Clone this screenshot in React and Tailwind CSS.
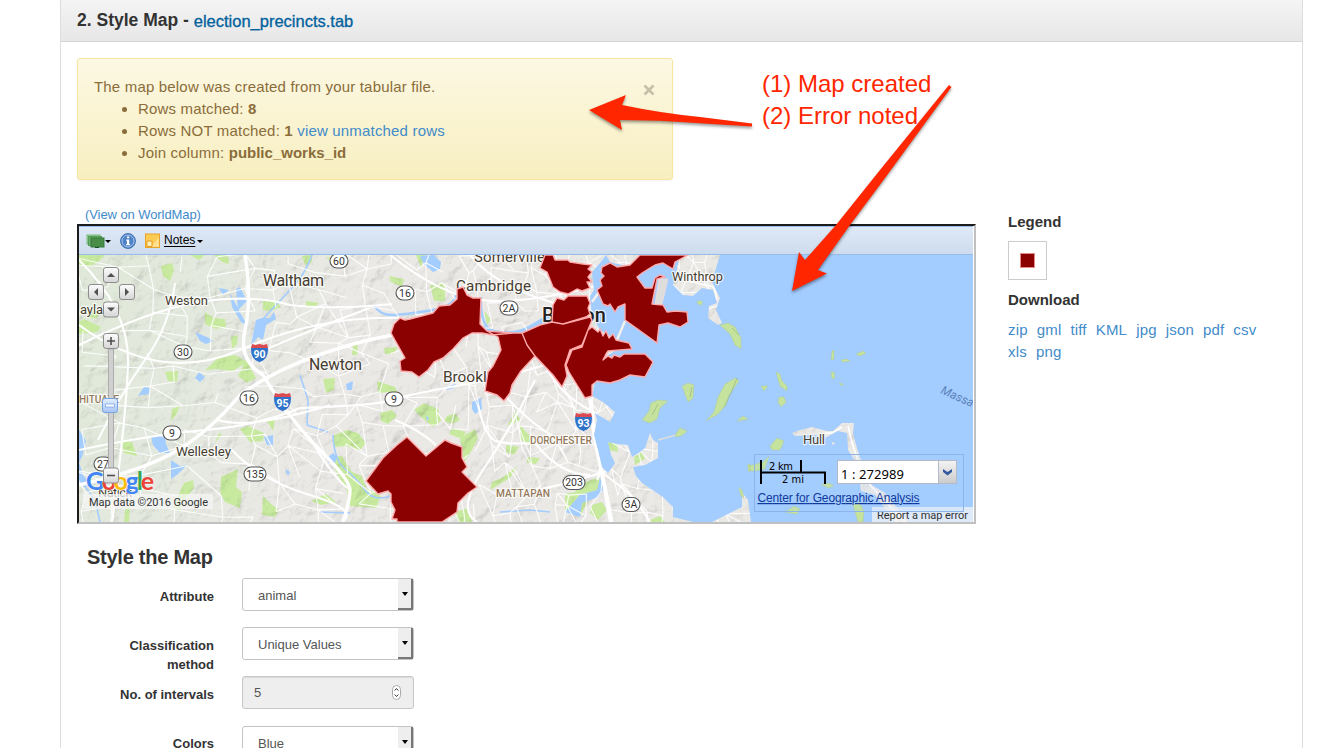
import React from "react";

const LAND =
  "M79 255H606L600 263 592 272 594 290 590 296 592 316 600 330 625 345 600 360 592 396 603 402 615 412 610 422 595 413 597 420 594 435 598 450 602 467 608 473 615 463 611 455 608 442 617 444 628 445 632 457 640 452 645 448 650 433 653 440 658 443 658 458 645 465 633 467 636 476 642 483 663 497 673 507 673 517 693 522H79Z M606 255H645L630 267 610 262Z M680 255 677 268 673 285 683 295 693 296 702 288 713 290 717 303 709 306 708 318 718 325 722 323 716 310 720 298 712 282 720 255Z M792 433 800 430 812 427 827 431 833 431 842 423 854 423 853 433 856 445 860 457 872 485 885 493 905 517 907 522H895L875 495 861 491 860 484 870 483 860 470 848 450 847 433 838 431 825 438 815 435 795 436Z M712 522 742 507 742 497 738 487 748 500 751 522Z M655 304 662 304 668 279 659 279Z M832 442 835 443 834 445 832 444Z";

const GREENS = [
  "M79 255H105L98 262 86 268 79 264Z", "M161 266 172 263 174 270 170 281 163 276Z", "M214 255 228 255 229 264 222 262Z",
  "M87 310 100 312 97 318 88 318Z", "M84 319 101 327 97 332 79 334V322Z", "M205 312 214 318 225 319 226 327 216 329 205 324Z",
  "M231 337 238 335 237 344 232 349Z", "M263 301 276 300 281 307 270 311 263 310Z", "M205 370 218 358 235 355 247 362 233 371 216 369Z",
  "M165 372 178 371 177 382 168 381Z", "M238 376 246 360 256 378 247 383Z", "M240 429 248 426 264 433 263 441 250 442Z",
  "M121 440 132 442 137 456 124 453Z", "M221 477 238 469 236 487 242 492 240 508 225 502 220 492Z", "M184 483 193 480 194 488 185 499 180 510 172 508Z",
  "M263 496 270 503 279 510 275 517 262 515Z", "M302 256 312 255 312 262 305 265Z", "M306 301 319 303 314 308 306 307Z",
  "M389 276 404 279 402 287 391 282Z", "M430 285 445 283 445 301 434 301Z", "M416 255H425L421 268Z", "M384 348 398 347 393 354 385 354Z",
  "M353 344 358 344 357 355 352 355Z", "M323 379 335 378 334 390 326 393Z", "M377 381 395 387 399 396 388 392 378 393Z",
  "M414 410 424 403 438 409 441 421 433 427 421 417Z", "M380 413 392 410 397 416 388 424 381 421Z", "M447 416 455 413 460 420 452 424 444 421Z",
  "M334 435 347 430 358 433 366 443 360 450 345 446 334 447Z", "M331 456 342 456 352 472 362 476 366 488 381 496 376 508 350 506 347 491 333 466Z",
  "M460 438 475 429 478 438 472 450 464 462Z", "M452 428 466 432 462 439 449 434Z", "M311 501 326 494 336 502 321 505Z", "M455 512 468 508 472 522H458Z",
  "M520 425 529 435 532 446 521 440Z", "M527 457 540 458 536 464 527 463Z", "M565 494 575 492 580 484 599 477 602 487 590 497 581 515 565 510Z",
  "M592 505 602 502 607 510 598 520 590 513Z", "M606 442 617 443 618 452 609 450Z", "M634 457 642 452 645 459 635 465Z",
  "M507 426 520 420 516 411Z", "M490 490 510 478 517 466 502 478 492 482Z", "M506 445 519 447 514 455 506 452Z", "M605 465 608 464 608 472Z",
  "M125 510 130 505 129 522H124Z", "M650 520 660 516 665 522H650Z", "M190 255 205 255 199 260Z",
  "M325 257 340 259 334 263Z", "M172 409 180 406 176 415 171 421Z", "M215 443 222 434 219 433Z", "M484 310 491 320 487 325Z", "M267 421 275 420 273 431Z",
];

const ISLANDS = [
  "M720 325 728 323 735 327 741 338 741 349 735 345 730 334Z", "M697 301 702 301 702 305 698 304Z",
  "M642 420 649 411 651 403 658 400 668 401 660 408 657 419 650 423Z", "M682 386 688 383 694 385 693 398 688 402Z",
  "M706 421 714 412 718 397 725 384 735 378 739 381 729 395 726 405 718 414Z", "M675 435 680 428 687 431 683 435 677 437Z",
  "M832 351 834 350 834 359 831 360Z", "M841 360 847 359 850 361 843 362Z", "M856 354 863 351 866 353 860 356Z",
  "M776 372 780 374 782 381 787 386 787 391 780 386Z", "M761 386 768 386 764 391Z", "M779 397 784 397 786 402 781 407 778 402Z",
  "M770 446 777 438 784 441 780 450 772 450Z", "M749 466 763 462 769 456 765 469 755 471 750 471Z",
  "M831 372 834 372 835 378 832 379Z", "M839 383 843 384 842 386Z", "M737 421 743 416 748 419 743 420Z",
  "M748 464 750 464 750 472 748 470Z", "M785 512 794 506 800 509 797 514Z", "M853 505 859 502 864 511 863 522H858Z", "M821 484 829 483 834 486 828 488Z", "M739 487 742 490 744 498 741 496Z",
];

const LAKES = [
  "M420 256 434 255 441 262 440 269 433 272 424 264Z", "M219 288 229 290 223 295Z", "M236 289 240 287 247 301 238 310Z", "M195 332 202 335 209 338 213 341 206 344 200 341Z",
  "M79 430 86 441 82 457 79 462Z", "M138 396 144 387 150 388 149 394 141 395Z", "M199 372 205 377 200 382 195 378Z", "M151 436 165 436 166 444 170 453 160 453 153 445Z",
  "M171 460 180 466 187 465 178 474 171 479Z", "M264 437 273 435 273 445 267 445Z", "M346 384 353 381 352 390 347 390Z", "M472 402 481 398 482 409 475 414 472 409Z",
  "M327 458 333 453 337 457 335 463 329 463Z", "M446 387 456 384 454 388 447 390Z", "M79 462 83 475 90 484 84 487 79 484Z", "M262 318 270 318 274 312 276 319 266 325 263 340 258 337 251 345 256 320Z",
  "M230 293 243 318 248 326 241 322 232 307Z", "M426 415 429 418 427 421Z", "M285 469 290 472 288 476Z", "M317 359 321 355 320 360Z",
];

const MAJOR = [
  "M79 345Q150 310 200 302T290 305Q330 310 392 304", "M79 450Q150 435 205 430T300 408Q380 405 392 400T500 378L545 365",
  "M79 325Q160 385 240 350T400 318", "M245 255Q252 300 245 330T263 375Q290 420 320 450T350 490 343 522",
  "M265 350Q310 330 370 308", "M79 485Q145 470 178 450T240 395Q280 365 350 345T485 330", "M470 255Q495 285 545 300T590 350Q590 400 597 445T610 522",
  "M598 470Q620 485 630 495T650 522", "M79 260Q130 310 128 365T112 522", "M218 420Q250 430 330 405", "M310 438Q333 478 350 490",
  "M478 405Q485 435 494 440T535 443Q560 475 590 475", "M535 380Q510 430 483 470T477 522", "M500 390Q530 425 560 440",
  "M545 365Q560 395 590 410T597 480", "M390 255Q440 295 481 300T600 285", "M175 283Q170 325 145 360T98 440",
  "M232 450Q260 480 310 495T342 522", "M535 490Q565 485 610 470", "M395 420Q420 430 436 445",
];

function streets() {
  let seed = 7;
  const rnd = () => (seed = (seed * 16807) % 2147483647) / 2147483647;
  const cols = [];
  let x = 79;
  while (x < 760) {
    const col = [];
    for (let y = 250; y < 540; y += 20) col.push([x + rnd() * 16 - 8, y + rnd() * 16 - 8]);
    cols.push(col);
    x += x < 240 ? 34 : x < 430 ? 23 : 15;
  }
  let d = "";
  cols.forEach((col, i) =>
    col.forEach((p, j) => {
      const q = cols[i + 1] && cols[i + 1][j];
      const r = col[j + 1];
      const s = cols[i + 1] && cols[i + 1][j + 1];
      if (q && rnd() < 0.68) d += `M${p}L${q}`;
      if (r && rnd() < 0.68) d += `M${p}L${r}`;
      if (s && rnd() < 0.18) d += `M${p}L${s}`;
    })
  );
  return d;
}
const STREETS = streets();

const DISTRICTS = [
  "M400 318 405 320 410 319 433 313 439 306 450 305 457 299 457 289 463 287 467 295 473 298 481 298 480 324 487 331 513 333 492 335 482 333 472 333 463 338 453 349 443 358 434 362 428 370 419 377 412 372 401 371 400 361 405 358 391 333 394 324Z",
  "M487 331 513 333 522 333 527 345 535 356 521 371 512 385 510 393 504 401 497 395 485 391 488 372 493 366 501 350 498 337Z",
  "M522 333 540 325 552 322 563 324 590 317 592 320 582 345 570 350 565 365 567 376 562 387 553 375 535 356 527 345Z",
  "M592 327 598 332 600 329 603 336 606 331 609 338 613 334 616 340 629 343 632 349 608 351 606 354 603 360 608 356 612 358 614 355 620 357 624 354 645 354 653 362 645 377 630 375 620 380 610 383 597 381 592 385 592 396 585 398 569 372 566 365 572 350 582 347 588 330Z",
  "M545 255 540 268 547 272 553 287 560 292 568 294 577 289 582 291 590 288 587 282 592 282 588 277 592 272 588 269 592 265 583 264 570 262 568 260 555 260 553 255Z",
  "M553 305 557 298 564 300 568 296 587 296 590 303 588 308 590 314 586 317 563 324 552 322Z",
  "M640 255 630 265 617 267 610 263 602 267 601 273 604 276 600 280 602 286 597 290 603 304 608 306 610 304 615 312 618 307 625 304 625 320 657 343 659 325 668 323 680 327 688 322 687 312 676 311 667 312 663 305 652 304 657 279 665 277 660 275 655 278 652 288 645 288 637 277 642 273 650 268 655 265 663 263 673 269 675 262 688 255Z",
  "M407 437 426 456 445 440 451 443 462 447 462 458 467 467 462 472 477 487 468 493 458 503 457 512 442 522H397L397 519 392 519 395 510 391 502 391 494 388 491 378 494 366 481 383 458 397 445Z",
];

const LABELS = [
  ["Waltham", 263, 286, 61, 16], ["Weston", 165, 305, 43, 13], ["ayla", 80, 314, 23, 13], ["Newton", 309, 370, 53, 15.8], ["Wellesley", 176, 456, 55, 13.4],
  ["Cambridge", 456, 291, 75, 15.2], ["Somerville", 474, 262, 71, 15], ["Winthrop", 672, 281, 51, 12.8], ["Hull", 803, 444, 22, 13],
];

const ROUTES = [["60", 339, 261], ["16", 405, 293], ["2A", 509, 308], ["30", 183, 352], ["16", 249, 398], ["9", 394, 399], ["9", 172, 433], ["27", 103, 464], ["135", 255, 474], ["203", 574, 482.5], ["3A", 631, 504.5]];
const SHIELDS = [["90", 259.5, 352], ["95", 282.5, 401], ["93", 583.5, 421]];

function PanButton({ x, y, d }) {
  return (
    <g transform={`translate(${x} ${y})`}>
      <rect x="-7.5" y="-7.5" width="15" height="15" rx="2.5" fill="url(#btn)" stroke="#8d8d8d" />
      <path d={d} fill="#505050" />
    </g>
  );
}

function MapCanvas() {
  return (
    <svg className="block h-[267px] w-[894px]" viewBox="79 255 894 267" fontFamily="Roboto, 'Liberation Sans', sans-serif">
      <defs>
        <clipPath id="land"><path d={LAND} /></clipPath>
        <linearGradient id="btn" x1="0" y1="0" x2="0" y2="1"><stop offset="0" stopColor="#fdfdfd" /><stop offset="1" stopColor="#d5d5d5" /></linearGradient>
        <linearGradient id="trig" x1="0" y1="0" x2="0" y2="1"><stop offset="0" stopColor="#f4f4f4" /><stop offset="1" stopColor="#cbcbcb" /></linearGradient>
        <linearGradient id="knob" x1="0" y1="0" x2="0" y2="1"><stop offset="0" stopColor="#e4efff" /><stop offset="1" stopColor="#a5c5f4" /></linearGradient>
        <linearGradient id="west" x1="79" x2="330" y1="300" y2="380" gradientUnits="userSpaceOnUse">
          <stop offset="0" stopColor="#e0e9d9" /><stop offset=".5" stopColor="#e4e9df" /><stop offset="1" stopColor="#ebe9e6" />
        </linearGradient>
        <filter id="relief" x="0" y="0" width="100%" height="100%">
          <feTurbulence type="fractalNoise" baseFrequency=".055" numOctaves="4" seed="12" />
          <feDiffuseLighting surfaceScale="5" diffuseConstant="1.3" lightingColor="#fff"><feDistantLight azimuth="225" elevation="52" /></feDiffuseLighting>
        </filter>
      </defs>
      <rect x="79" y="255" width="894" height="267" fill="#a3ccff" />
      <g clipPath="url(#land)">
        <rect x="79" y="255" width="894" height="267" fill="url(#west)" />
        <path d={GREENS.join("")} fill="#c8ea9f" />
        <rect x="79" y="255" width="894" height="267" filter="url(#relief)" opacity=".24" style={{ mixBlendMode: "multiply" }} />
        <path d={LAKES.join("")} fill="#a3ccff" />
        <path d="M374 305Q380 316 395 315T433 310T457 292M481 297Q480 322 490 330" fill="none" stroke="#a3ccff" strokeWidth="2.5" />
        <path d="M333 435Q334 460 345 469T365 490 390 496M262 320 290 290Q305 275 312 255M79 478 95 500 100 522M300 375 308 400 307 425 328 432M320 512 350 513M500 512 530 510 550 512" fill="none" stroke="#a3ccff" strokeWidth="1.6" />
        <path d="M483 326Q510 337 530 325L552 312 552 322 530 332Q505 338 485 332ZM565 512 580 495 597 490 600 478 605 487 598 497 582 503 580 517Z M590 340 597 350 592 365Z" fill="#a3ccff" />
        <path d={STREETS} fill="none" stroke="#fff" strokeWidth="1.1" opacity=".9" />
        <path d={MAJOR.join("")} fill="none" stroke="#fff" strokeWidth="2.1" />
        <path d="M245 255Q252 300 245 330T263 375Q290 420 320 450T350 490 343 522M79 485Q145 470 178 450T240 395Q280 365 350 345T485 330M590 400Q592 430 600 465T612 522" fill="none" stroke="#fff" strokeWidth="3.4" />
        <path d="M842 427 832 433 825 433M848 426Q855 460 870 485L905 522M675 278 714 287 717 300" fill="none" stroke="#fff" strokeWidth="1.5" />
      </g>
      <path d="M592 302 604 285M625 321 617 340M590 262 602 255" fill="none" stroke="#f3f1ee" strokeWidth="2.4" />
      <path d="M658 440 676 435" stroke="#dedddb" strokeWidth="1.4" />
      <path d={ISLANDS.join("")} fill="#c5e39c" stroke="#aec99a" strokeWidth=".5" />
      <path d="M737 378 731 393 724 407M692 387 690 397M658 404 652 415M739 335 732 328" fill="none" stroke="#9dba84" strokeWidth=".8" />

      <g fill="#463d30" stroke="#fff" strokeWidth="2.4" strokeOpacity=".75" paintOrder="stroke" strokeLinejoin="round">
        {LABELS.map(([t, x, y, w, s]) => <text key={t} x={x} y={y} fontSize={s} textLength={w}>{t}</text>)}
        <text x="443" y="382" fontSize="15.5" textLength="64">Brookline</text>
        <text x="542" y="322" fontSize="20" fontWeight="500" textLength="64" fill="#222">Boston</text>
        <text x="98" y="497" fontSize="13" textLength="34">Natick</text>
        <g fill="#94795a" fontSize="10.2" fontWeight="500">
          <text x="530" y="444" textLength="62">DORCHESTER</text>
          <text x="496" y="497" textLength="54">MATTAPAN</text>
          <text x="79" y="403" textLength="40">HITUATE</text>
        </g>
      </g>
      <text x="940" y="393" fontSize="12" fontStyle="italic" fill="#5b83bb" transform="rotate(24 940 393)">Massa</text>
      <path d={DISTRICTS.join("")} fill="#8b0000" stroke="#ffaaaa" strokeWidth="1.4" strokeLinejoin="round" />
      <path d="M655 304 662 304 668 279 659 279Z" fill="#dedddb" stroke="#f7d6d6" strokeWidth=".6" />
      {ROUTES.map(([t, x, y], i) => (
        <g key={i}>
          <rect x={x - (t.length > 2 ? 11 : 9)} y={y - 7} width={t.length > 2 ? 22 : 18} height="14" rx="7" fill="#fff" stroke="#565656" strokeWidth="1.1" />
          <text x={x} y={y + 3.8} fontSize="10.5" fill="#333" textAnchor="middle">{t}</text>
        </g>
      ))}
      {SHIELDS.map(([t, x, y]) => (
        <g key={t} transform={`translate(${x} ${y})`}>
          <path d="M-7.5-6.5Q-4-5 0-6.5 4-5 7.5-6.5L9-3Q9 8 0 10.500-9 8-9-3Z" fill="#2f72c8" stroke="#f4f4f4" strokeWidth=".8" />
          <path d="M-7.500-8 -4-7 0-8 4-7 7.500-8 8.500-4H-8.500Z" fill="#dc4b50" />
          <text y="5.500" fontSize="10.500" fontWeight="700" fill="#fff" textAnchor="middle">{t}</text>
        </g>
      ))}

      <text x="86" y="490" fontSize="25" fontFamily="Lato, sans-serif" fontWeight="700" textLength="68" stroke="#fff" strokeWidth="1.500" paintOrder="stroke" strokeOpacity=".7">
        <tspan fill="#4285f4">G</tspan><tspan fill="#ea4335">o</tspan><tspan fill="#fbbc05">o</tspan><tspan fill="#4285f4">g</tspan><tspan fill="#34a853">l</tspan><tspan fill="#ea4335">e</tspan>
      </text>
      <rect x="83" y="494" width="130" height="15" fill="#f5f5f5" opacity=".75" />
      <text x="89" y="506" fontSize="11" fill="#333" textLength="119">Map data ©2016 Google</text>

      <rect x="108.500" y="349" width="5" height="120" fill="#d0d0d0" stroke="#a2a2a2" strokeWidth=".8" />
      <PanButton x={111} y={275} d="M-4 2 0-2 4 2Z" />
      <PanButton x={96} y={292} d="M2-4-2 0 2 4Z" />
      <PanButton x={127} y={292} d="M-2-4 2 0-2 4Z" />
      <PanButton x={111} y={309.500} d="M-4-2 0 2 4-2Z" />
      <PanButton x={111} y={341} d="M-4-.8H-.8V-4H.8V-.8H4V.8H.8V4H-.8V.8H-4Z" />
      <PanButton x={111} y={475.500} d="M-4-.8H4V.8H-4Z" />
      <rect x="102.500" y="398.500" width="15" height="14" rx="2.500" fill="url(#knob)" stroke="#78a2e0" />
      <path d="M105.500 404H114.500V407H105.500Z" fill="#fff" stroke="#7ba5e8" strokeWidth=".8" />

      <rect x="872" y="507" width="101" height="15" fill="#f5f5f5" opacity=".72" />
      <text x="877" y="519" fontSize="11" fill="#333" textLength="91">Report a map error</text>
      <rect x="754.500" y="454.500" width="209" height="57" fill="#a3ccff" fillOpacity=".12" stroke="#8eb2ea" />
      <path d="M761 460V484M760 472.500H826M801 460V472M825 472V484" fill="none" stroke="#000" strokeWidth="2" />
      <g fontFamily="'DejaVu Sans Condensed', 'DejaVu Sans', sans-serif" fontSize="11" fill="#000">
        <text x="769" y="470" textLength="24">2 km</text>
        <text x="782" y="483" textLength="22">2 mi</text>
      </g>
      <rect x="837.500" y="460.500" width="101" height="23" fill="#fff" stroke="#b5b8c8" />
      <rect x="938.500" y="460.500" width="18" height="23" fill="url(#trig)" stroke="#b5b8c8" />
      <path d="M943 469 947.500 472 952 469V472L947.500 475.500 943 472Z" fill="#335a9c" />
      <text x="841" y="479" fontSize="13" fontFamily="'Noto Sans', sans-serif" textLength="63" fill="#000">1 : 272989</text>
      <text x="757.500" y="502" fontSize="12" fontFamily="'Liberation Sans', sans-serif" textLength="162" fill="#10399c" textDecoration="underline">Center for Geographic Analysis</text>
    </svg>
  );
}

function Caret() {
  return <span className="mt-px block h-0 w-0 border-x-[3px] border-t-[3px] border-x-transparent border-t-black" />;
}

function Toolbar() {
  return (
    <div className="flex h-[29px] w-[894px] items-center border-b border-t border-[#99bbe8] bg-linear-to-b from-[#dfe9f7] to-[#cddced] pl-[7px]">
      <svg className="h-4 w-[19px]" viewBox="0 0 19 16">
        <rect x="1" y="2" width="13" height="9" fill="#9bcf9b" stroke="#75b77a" />
        <rect x="2.500" y="3.500" width="13" height="9" fill="#6db16c" stroke="#539d56" />
        <rect x="5" y="5" width="13" height="9" fill="#498d49" stroke="#32793b" />
        <path d="M9 14.500H13" stroke="#174b20" />
      </svg>
      <span><Caret /></span>
      <svg className="ml-[9px] h-4 w-4" viewBox="0 0 16 16">
        <circle cx="8" cy="8" r="7.400" fill="#4f83c5" stroke="#3c6eaf" />
        <circle cx="8" cy="8" r="6" fill="none" stroke="#a9c7ee" />
        <path d="M7 3.500H9.200V5.300H7ZM6.200 6.500H9.200V11H10.200V12.300H6V11H7V7.700H6.200Z" fill="#fff" />
      </svg>
      <svg className="ml-[9px] h-[15px] w-[15px]" viewBox="0 0 15 15">
        <rect x=".5" y="1" width="14" height="13.500" fill="#fbcb53" stroke="#e9a328" />
        <path d="M14 4 6 14H14Z" fill="#fddf8d" />
        <path d="M2 8H7V13.500H2Z" fill="#fff0b8" stroke="#e59c24" />
      </svg>
      <span className="-mt-px ml-1 text-[12px] text-black underline underline-offset-2">Notes</span>
      <span className="ml-[2px]"><Caret /></span>
    </div>
  );
}

function Select({ value }) {
  return (
    <div className="flex h-[33px] w-[172px] items-stretch justify-between rounded-[3px] border border-[#c3c3c3] bg-white">
      <span className="pl-[15px] text-[13px] leading-[33px] text-[#555]">{value}</span>
      <span className="flex w-[15px] items-center justify-center border-b-2 border-r-2 border-[#777] bg-[#eee]">
        <span className="block h-0 w-0 border-x-[3.5px] border-t-[4px] border-x-transparent border-t-black" />
      </span>
    </div>
  );
}

function Row({ label, children }) {
  return (
    <div className="flex h-[49px]">
      <div className="w-[137px] pt-[9px] text-right text-[13px] font-bold leading-[19px] text-[#333]">{label}</div>
      <div className="ml-7">{children}</div>
    </div>
  );
}

export default function App() {
  return (
    <div className="relative h-[748px] w-[1330px] overflow-hidden bg-white font-['Liberation_Sans',Arial,sans-serif] text-[#333]">
      <main className="ml-[60px] h-full w-[1243px] border-x border-[#ddd]">
        <header className="flex h-[42px] items-center border-b border-[#d5d5d5] bg-linear-to-b from-[#f4f4f4] to-[#e7e7e7] pl-4">
          <h1 className="whitespace-pre text-[17.5px] font-bold">2. Style Map - </h1>
          <a className="pt-0.5 text-[16.5px] text-[#00619d] [-webkit-text-stroke:0.3px_#00619d]">election_precincts.tab</a>
        </header>
        <section className="px-4 pt-4">
          <div className="flex h-[122px] w-[596px] justify-between rounded-[3px] border border-[#f5e79e] bg-linear-to-b from-[#fcf8e3] to-[#f8efc0] pl-4 pr-[17px] pt-[17px] text-[15px] leading-[22px] tracking-[0.18px] text-[#8a6d3b] shadow-[0_1px_2px_rgba(0,0,0,0.05)]">
            <div>
              <p>The map below was created from your tabular file.</p>
              <ul className="list-disc pl-11">
                <li>Rows matched: <b>8</b></li>
                <li>Rows NOT matched: <b>1</b> <a className="text-[#428bca]">view unmatched rows</a></li>
                <li>Join column: <b className="tracking-normal">public_works_id</b></li>
              </ul>
            </div>
            <svg className="mt-2 h-3 w-3" viewBox="0 0 12 12"><path d="M1.500 1.500 10.500 10.500M10.500 1.500 1.500 10.500" stroke="#c5c0a8" strokeWidth="2.700" /></svg>
          </div>

          <div className="flex pt-[25px]">
            <div className="w-[899px]">
              <a className="block h-[19px] pl-2 text-[13px] leading-[19px] tracking-[-0.08px] text-[#428bca]">(View on WorldMap)</a>
              <div className="h-[300px] border-2 border-b-[#c0c0c0] border-l-[#1c1c1c] border-r-[#c0c0c0] border-t-[#1c1c1c]">
                <Toolbar />
                <MapCanvas />
              </div>
              <h2 className="mb-[9px] mt-[21px] pl-2.5 text-[20px] font-bold leading-6 tracking-[-0.25px]">Style the Map</h2>
              <Row label="Attribute"><Select value="animal" /></Row>
              <Row label={<>Classification<br />method</>}><Select value="Unique Values" /></Row>
              <Row label="No. of intervals">
                <div className="flex h-[33px] w-[172px] items-center justify-between rounded-[3px] border border-[#c8c8c8] bg-[#eee] pl-[11px] pr-3 text-[13px] text-[#555] shadow-[inset_0_1px_1px_rgba(0,0,0,0.08)]">
                  5
                  <svg className="h-[15px] w-[9px]" viewBox="0 0 9 15">
                    <rect x=".5" y=".5" width="8" height="14" rx="4" fill="#fff" stroke="#aaa" />
                    <path d="M2.700 5.500 4.500 3.500 6.300 5.500M2.700 9.500 4.500 11.500 6.300 9.500" fill="none" stroke="#333" />
                  </svg>
                </div>
              </Row>
              <div className="-mt-px pt-px"><Row label="Colors"><div className="pt-px"><Select value="Blue" /></div></Row></div>
            </div>
            <aside className="ml-8 w-[262px] pt-1.5 text-[15px] leading-[22px]">
              <h3 className="font-bold">Legend</h3>
              <div className="mb-[9px] mt-2 flex h-[39px] w-[39px] items-center justify-center border border-[#ccc]">
                <span className="h-[15px] w-[15px] border border-[#e88a8a] bg-[#8b0000]" />
              </div>
              <h3 className="font-bold">Download</h3>
              <div className="mt-2 flex flex-wrap gap-x-[9px] tracking-[0.18px] text-[#428bca]">
                {["zip", "gml", "tiff", "KML", "jpg", "json", "pdf", "csv", "xls", "png"].map((f) => <a key={f}>{f}</a>)}
              </div>
            </aside>
          </div>
        </section>
      </main>

      <div className="absolute left-[762px] top-[68px] text-[24px] leading-8 text-[#ff2600]">
        <p>(1) Map created</p>
        <p>(2) Error noted</p>
      </div>
      <svg className="absolute left-0 top-0 h-[748px] w-[1330px] drop-shadow-[0_2px_1.5px_rgba(0,0,0,0.4)]" viewBox="0 0 1330 748">
        <path d="M589 110 626 95 622 105Q660 113 700 117L752 123.500V126.500L700 123.300Q660 120 620 120L622 130Z" fill="#ff2600" />
        <path d="M792 291 799 252 805 260 836 225 880 170 949 85 951.500 87 885 178 850 225 818 270 827 273.500Z" fill="#ff2600" />
      </svg>
    </div>
  );
}
